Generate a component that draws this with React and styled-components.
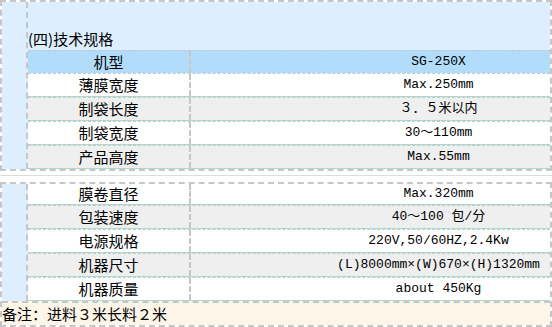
import React from "react";
import styled, { createGlobalStyle } from "styled-components";

const GlobalStyle = createGlobalStyle`
	body {
		margin: 0;
		background: #fff;
	}
`;

const Page = styled.div`
	width: 552px;
	font-family: "Noto Sans CJK SC", sans-serif;
	font-size: 15px;
	color: #000;
`;

const Section = styled.div`
	display: grid;
	grid-template-columns: 26px 1fr;
	border: 2px dashed #c6c6c6;
`;

const Side = styled.div`
	background: #ddeeff;
	border-right: 2px dashed #c6c6c6;
`;

const Body = styled.div`
	display: flex;
	flex-direction: column;
`;

const Caption = styled.div`
	height: 48px;
	display: flex;
	align-items: flex-end;
	background: #ddeeff;
	line-height: 20px;
	padding-bottom: 1px;
	box-sizing: border-box;
`;

const bgMap = {
	head: "#b1ddfb",
	white: "#ffffff",
	gray: "#efefef",
};

const Row = styled.div`
	display: grid;
	grid-template-columns: 163px 1fr;
	height: ${(p) => (p.$first ? 20 : 22)}px;
	box-sizing: content-box;
	background: ${(p) => bgMap[p.$tone]};
	border-top: ${(p) => (p.$first ? "none" : "1px dashed #c6c6c6")};
	border-bottom: ${(p) =>
		p.$tone === "head" ? "none" : "1px solid #a9dad2"};
	line-height: ${(p) => (p.$first ? 20 : 22)}px;
`;

const Label = styled.div`
	text-align: center;
	border-right: 2px dashed #c6c6c6;
`;

const Value = styled.div`
	padding-left: 136px;
	text-align: center;
	white-space: nowrap;
	font-family: "Liberation Mono", "Noto Sans CJK SC", monospace;
	font-size: 13px;
`;

const Divider = styled.div`
	height: 1px;
	margin: 4px 0 6px;
	background: #dcdcdc;
`;

const Note = styled.div`
	grid-column: 1 / -1;
	height: 22px;
	line-height: 22px;
	background: #fdf5e8;
	border-top: 2px dashed #c6c6c6;
	white-space: nowrap;
`;

const firstSpecs = [
	["薄膜宽度", "Max.250mm"],
	["制袋长度", "３．５米以内"],
	["制袋宽度", "30～110mm"],
	["产品高度", "Max.55mm"],
];

const secondSpecs = [
	["膜卷直径", "Max.320mm"],
	["包装速度", "40～100 包/分"],
	["电源规格", "220V,50/60HZ,2.4Kw"],
	["机器尺寸", "(L)8000mm×(W)670×(H)1320mm"],
	["机器质量", "about 450Kg"],
];

export default function App() {
	return (
		<Page>
			<GlobalStyle />
			<Section>
				<Side />
				<Body>
					<Caption>(四)技术规格</Caption>
					<Row $tone="head">
						<Label>机型</Label>
						<Value>SG-250X</Value>
					</Row>
					{firstSpecs.map(([label, value], i) => (
						<Row key={label} $tone={i % 2 === 0 ? "white" : "gray"}>
							<Label>{label}</Label>
							<Value>{value}</Value>
						</Row>
					))}
				</Body>
			</Section>
			<Divider />
			<Section>
				<Side />
				<Body>
					{secondSpecs.map(([label, value], i) => (
						<Row
							key={label}
							$first={i === 0}
							$tone={i % 2 === 0 ? "white" : "gray"}
						>
							<Label>{label}</Label>
							<Value>{value}</Value>
						</Row>
					))}
				</Body>
				<Note>备注：进料３米长料２米</Note>
			</Section>
		</Page>
	);
}
